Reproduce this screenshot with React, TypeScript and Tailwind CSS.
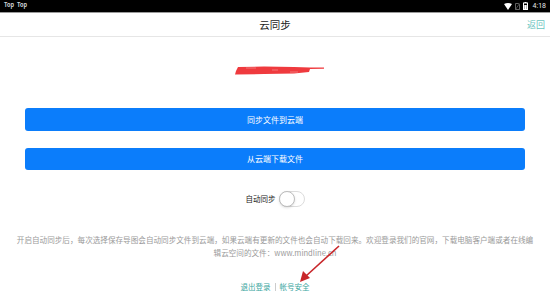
import React from "react";

const font = { fontFamily: '"Noto Sans CJK SC", "Noto Sans", sans-serif' };

export default function App() {
  return (
    <div className="relative w-[550px] h-[308px] bg-white overflow-hidden" style={font}>
      {/* status bar */}
      <div className="h-[12px] bg-black flex items-center justify-between px-[4px]">
        <div className="flex gap-[3px] text-[5.5px] font-bold text-gray-300 leading-none">
          <span>Top</span>
          <span>Top</span>
        </div>
        <div className="flex items-center gap-[3px] text-[7px] text-gray-200 leading-none" style={{ fontFamily: 'Roboto, sans-serif' }}>
          <svg width="8" height="7" viewBox="0 0 8 7"><path d="M0 1 Q4 -1 8 1 L4 7 Z" fill="#fff" /></svg>
          <svg width="5" height="7" viewBox="0 0 5 7"><path d="M0.5 0.5 H3.5 L4.5 1.5 V6.5 H0.5 Z" fill="none" stroke="#777" strokeWidth="0.8" /><path d="M0.5 6.5 L4.5 0.5" stroke="#777" strokeWidth="0.6" /></svg>
          <svg width="5" height="8" viewBox="0 0 5 8"><rect x="1.5" y="0" width="2" height="1" fill="#fff" /><rect x="0.5" y="1" width="4" height="6.5" fill="none" stroke="#fff" strokeWidth="1" /><rect x="1.3" y="3" width="2.4" height="4" fill="#fff" /></svg>
          <span className="ml-[2px]">4:18</span>
        </div>
      </div>
      <div className="h-[1px] bg-[#9a9a9a]" />
      {/* header */}
      <div className="relative h-[24px] flex items-center justify-center border-b border-[#e6e6e6]">
        <span className="text-[10.5px] text-[#222]">云同步</span>
        <span className="absolute right-[5px] text-[9px] text-[#6cc4c0]">返回</span>
      </div>
      {/* scribble */}
      <div className="flex justify-center mt-[27px] h-[12px]">
        <svg width="92" height="12" viewBox="0 0 92 12" className="ml-[10px]">
          <path d="M2 7 L4 3 L30 2.5 L60 3 L76 3.6 L90 3.6 L90 4.8 L76 5 L75 8 L60 9.5 L30 10 L1 10.5 Z" fill="#ef3a3e" />
          <path d="M12 4 H22 M38 6 H44 M56 8 H64" stroke="#f7a0a0" strokeWidth="0.6" />
        </svg>
      </div>
      {/* buttons */}
      <div className="flex flex-col gap-[17px] px-[25px] mt-[32px]">
        <div className="h-[23px] rounded-[3px] bg-[#0b7dfb] flex items-center justify-center text-white text-[8px]">同步文件到云端</div>
        <div className="h-[22px] rounded-[3px] bg-[#0b7dfb] flex items-center justify-center text-white text-[8px]">从云端下载文件</div>
      </div>
      {/* toggle */}
      <div className="flex items-center justify-center gap-[3px] mt-[21px]">
        <span className="text-[7.5px] text-[#222]">自动同步</span>
        <div className="relative w-[26px] h-[16px] rounded-full border border-[#dcdcdc] bg-white">
          <div className="absolute left-[-1px] top-[-1px] w-[16px] h-[16px] rounded-full bg-white border border-[#bdbdbd] shadow-sm" />
        </div>
      </div>
      {/* paragraph */}
      <div className="mt-[26px] px-[15px] text-center text-[7.6px] leading-[13px] text-[#9a9a9a]">
        开启自动同步后，每次选择保存导图会自动同步文件到云端，如果云端有更新的文件也会自动下载回来。欢迎登录我们的官网，下载电脑客户端或者在线编辑云空间的文件：www.mindline.cn
      </div>
      {/* links */}
      <div className="flex items-center justify-center gap-[4px] mt-[22px] text-[7.5px] text-[#3aa6a0]">
        <span>退出登录</span>
        <span className="w-px h-[8px] bg-[#cccccc]" />
        <span>帐号安全</span>
      </div>
      {/* arrow */}
      <svg className="absolute left-0 top-0" width="550" height="308" viewBox="0 0 550 308">
        <line x1="339" y1="246" x2="306" y2="276" stroke="#c8262a" strokeWidth="1.6" />
        <path d="M300 282 L303 271 L310 278 Z" fill="#c8262a" />
      </svg>
    </div>
  );
}
